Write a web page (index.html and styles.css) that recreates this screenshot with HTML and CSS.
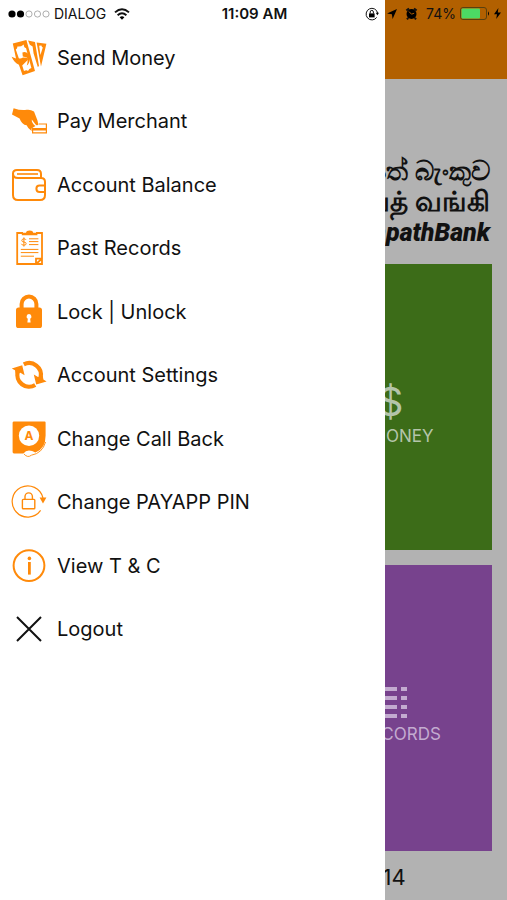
FILE: index.html
```html
<!DOCTYPE html>
<html lang="en">
<head>
  <meta charset="UTF-8" />
  <meta name="viewport" content="width=device-width, initial-scale=1.0"/>
  <title>PayApp</title>
  <link rel="stylesheet" href="styles.css">
</head>
<body>
  <!-- Status bar -->
  <div class="status-bar">
    <div class="status-left">
      <svg class="signal" width="42" height="10" viewBox="0 0 42 10">
        <circle cx="4" cy="5" r="3.6"/>
        <circle cx="12.5" cy="5" r="3.6"/>
        <g fill="none" stroke="#999" stroke-width="0.8">
          <circle cx="21" cy="5" r="3.1"/>
          <circle cx="29.5" cy="5" r="3.1"/>
          <circle cx="38" cy="5" r="3.1"/>
        </g>
      </svg>
      <span>DIALOG</span>
      <svg class="wifi" width="16" height="12" viewBox="0 0 16 12">
        <g fill="none" stroke="#111" stroke-width="1.9">
          <path d="M1 4.4Q8 -2 15 4.4"/>
          <path d="M3.6 7.3Q8 3.3 12.4 7.3"/>
        </g>
        <path d="M5.6 9.3Q8 7.3 10.4 9.3L8 11.8z"/>
      </svg>
    </div>
    <time>11:09 AM</time>
    <div class="status-right">
      <svg width="14" height="14" viewBox="0 0 14 14">
        <path d="M11.7 10.4A5.8 5.8 0 1 1 12.6 6" fill="none" stroke="#111" stroke-width="1"/>
        <path d="M10.8 5.8h3.2l-1.6 2.4z"/>
        <rect x="4" y="6.4" width="5.6" height="4"/>
        <path d="M5.2 6.6V5a1.6 1.6 0 0 1 3.2 0v1.6" fill="none" stroke="#111"/>
      </svg>
      <svg width="10" height="10" viewBox="0 0 10 10">
        <path d="M10 0L5.6 10L4.9 5.2L0 4.5z"/>
      </svg>
      <svg width="13" height="13" viewBox="0 0 13 13">
        <circle cx="6.5" cy="7" r="5"/>
        <path d="M1.4 3.6L4 1.4M11.6 3.6L9 1.4M3.2 10.8L2 12.4M9.8 10.8L11 12.4" stroke="#111" stroke-width="2"/>
        <path d="M4 4.6L6.5 7.2L9.2 6.2" fill="none" stroke="#b26000"/>
      </svg>
      <span>74%</span>
      <svg class="battery" width="30" height="13" viewBox="0 0 30 13">
        <rect x="0.5" y="0.5" width="26" height="12" rx="2.5" fill="none" stroke="#59400f"/>
        <rect x="1.5" y="1.5" width="18.5" height="10" rx="1" fill="#4cd964"/>
        <path d="M28 4.2Q30 6.5 28 8.8z"/>
      </svg>
      <svg width="7" height="11" viewBox="0 0 7 11">
        <path d="M4.4 0L0 6.3H3L2.2 11L7 4.4H3.8z"/>
      </svg>
    </div>
  </div>

  <!-- Slide-out menu -->
  <nav class="drawer">
    <ul class="menu">
      <li><a href="#send">
        <svg class="icon" viewBox="0 0 36 36">
          <path fill-rule="evenodd" d="M1.8 3.6L15.4 0L24 31L11.6 35.2L7.9 24.8C4.8 23.6 2.4 20.8 0.6 16.8L5 18.4zM6.4 6.4C6.4 8 5.6 9 4.8 9.4L7.8 18.2Q9.6 19 12 17.4L16.4 17.8Q18 20 15.2 21.4L11.2 25.4L13 31Q15.6 29.6 17 31Q18 28.4 20.4 28L15 8Q12.8 7.6 12.8 4.4Q9.2 7.2 6.4 6.4z"/>
          <path d="M11.4 12.4Q17.8 10.8 18.4 18.4Q18.6 24 15.8 25.4Q17.4 20 16 17.4L11.8 16.6z"/>
          <path d="M17 0.4L24 2L28 26L26.8 27L22.6 13.4L21.6 6.4L18.8 4.8z"/>
          <path fill-rule="evenodd" d="M25.6 2.4L35.4 3.8L30 26.6L28.6 19zM28.2 5.8L29.4 15L31.8 7.4Q30.6 7 30.4 5.6z"/>
        </svg>
        <span>Send Money</span></a></li>
      <li><a href="#pay">
        <svg class="icon" viewBox="0 0 36 36">
          <path d="M2.6 5.2Q10 7.8 15.6 6.8Q19.4 6.2 23 8.4L26.4 17.2L27.4 21.6Q26.4 23.2 24.6 21.4L20.8 16.6Q20.4 20 24.4 23L20.6 25.6L20.6 28Q17 25.6 15.6 22.2Q10.8 21.6 8.6 15.4L1 11.4z"/>
          <path fill-rule="evenodd" d="M27.8 20.4H36V30.4H21V25H34.8V21.6H27.8zM22.2 27.6V29.2H34.8V27.6z"/>
        </svg>
        <span>Pay Merchant</span></a></li>
      <li><a href="#balance">
        <svg class="icon line" viewBox="0 0 36 36" stroke-width="2">
          <path d="M2 6V28Q2 33 7 33H29Q34 33 34 28V15Q34 11 30 11H7Q2 11 2 6.5Q2 3 6 3H26Q30 3 30 7V11"/>
          <path d="M6 7H27" stroke-width="1.6"/>
          <path d="M34 18.6H28.6Q25.4 18.6 25.4 21.8T28.6 25H34"/>
        </svg>
        <span>Account Balance</span></a></li>
      <li><a href="#records">
        <svg class="icon" viewBox="0 0 36 36">
          <path class="line" stroke-width="1.8" d="M12 3H6.2V34H25L31 28.6V3H25M25 34V28.6H31V34H25"/>
          <path d="M10.8 5.2V2.8H15Q15.4 0.4 18.6 0.4T22.2 2.8H26.4V5.2z"/>
          <path class="line" stroke-width="1" d="M18 8.8H27.4M18 11.6H27.4M18 14.6H27.4M9.8 19.4H27.4M9.8 22.6H27.4M9.8 26.2H23"/>
          <path class="line" stroke-width="1" d="M15 9.8Q14.6 8.8 12.8 8.8Q10.8 9 10.8 10.6Q11 12 13 12Q15.2 12.2 15.2 13.8Q15 15.2 12.8 15.2Q10.8 15.2 10.4 13.8M12.9 7.4V16.6"/>
        </svg>
        <span>Past Records</span></a></li>
      <li><a href="#lock">
        <svg class="icon" viewBox="0 0 36 36">
          <path class="line" stroke-width="4" d="M10.6 16V10A7.4 7.4 0 0 1 25.4 10V16"/>
          <path fill-rule="evenodd" d="M7.6 13.4H28.4Q31 13.4 31 16V31.4Q31 34 28.4 34H7.6Q5 34 5 31.4V16Q5 13.4 7.6 13.4zM18 20A2.6 2.6 0 0 0 16.8 24.8L16.4 28.6H19.6L19.2 24.8A2.6 2.6 0 0 0 18 20z"/>
        </svg>
        <span>Lock | Unlock</span></a></li>
      <li><a href="#settings">
        <svg class="icon" viewBox="0 0 36 36">
          <path class="line" stroke-width="4.2" d="M12.8 7.4A11.8 11.8 0 0 1 29.6 20.6M24.2 28A11.8 11.8 0 0 1 6.8 14.6"/>
          <path d="M0.8 11.4L11.2 8.2L13.6 18.2L9.4 15.8L4.6 16.8L4 13.2zM35.6 24.4L25.2 27.4L22.8 17.4L27 20L31.8 18.8L32.4 22.6z"/>
        </svg>
        <span>Account Settings</span></a></li>
      <li><a href="#callback">
        <svg class="icon" viewBox="0 0 36 36">
          <path d="M3 0.4H33.6Q34.6 0.4 34.6 1.4V14.6Q34.6 28 24.4 31.6Q21 29.6 18 29.6Q14.6 29.8 12.4 32.4H3Q1.6 32.4 1.6 31V1.8Q1.6 0.4 3 0.4z"/>
          <circle cx="18" cy="14.8" r="10.2" fill="#fff"/>
          <path class="line" stroke-width="0.9" d="M13 33Q16.6 37.2 20.4 34.2Q31.4 32.2 34.6 21"/>
          <path d="M14 31.6L20 30L21.4 32.4L17 34.4z" fill="#fff"/>
          <text x="18" y="19" text-anchor="middle">A</text>
        </svg>
        <span>Change Call Back</span></a></li>
      <li><a href="#pin">
        <svg class="icon" viewBox="0 0 36 36">
          <path class="line" stroke-width="1.2" d="M29.6 26.4A15.6 15.6 0 1 1 32 14"/>
          <path d="M28.6 13.6H35.4L32 19.6z"/>
          <rect class="line" stroke-width="1.4" x="11.4" y="15.4" width="12.4" height="9.4" rx="0.8"/>
          <path class="line" stroke-width="1.4" d="M14 15.2V12.6A3.7 3.7 0 0 1 21.4 12.6V15.2"/>
        </svg>
        <span>Change PAYAPP PIN</span></a></li>
      <li><a href="#terms">
        <svg class="icon" viewBox="0 0 36 36">
          <circle class="line" stroke-width="2" cx="18" cy="17.6" r="15.4"/>
          <circle cx="18.4" cy="10.4" r="1.8"/>
          <path d="M17 14H19.8V26.6H17z"/>
        </svg>
        <span>View T &amp; C</span></a></li>
      <li><a href="#logout">
        <svg class="icon" viewBox="0 0 36 36">
          <path d="M6 6L30 30M30 6L6 30" stroke="#111" stroke-width="2"/>
        </svg>
        <span>Logout</span></a></li>
    </ul>
  </nav>

  <!-- Home screen, dimmed while the menu is open -->
  <main class="home">
    <header class="top-bar"></header>
    <div class="brand">
      <p class="sinhala" lang="si">සම්පත් බැංකුව</p>
      <p class="tamil" lang="ta">சம்பத் வங்கி</p>
      <p class="english">SampathBank</p>
    </div>
    <div class="tiles">
      <button class="tile send">
        <span class="dollar">$</span>
        <span>SEND MONEY</span>
      </button>
      <button class="tile records">
        <svg width="60" height="34" viewBox="0 0 60 34" fill="none" stroke="#c3abd0" stroke-width="4">
          <path d="M0 3H50M0 12H50M0 21H50M0 30H50M54 3H60M54 12H60M54 21H60M54 30H60"/>
        </svg>
        <span>PAST RECORDS</span>
      </button>
    </div>
    <footer>14</footer>
  </main>
</body>
</html>
```

FILE: styles.css
```css
/* Basic resets and layout */
* {
  margin: 0;
  padding: 0;
  box-sizing: border-box;
}
body {
  position: relative;
  min-height: 100vh;
  font-family: Inter, "Liberation Sans", sans-serif;
  color: #111;
  background: #b2b2b2;
  overflow-x: hidden;
}

/* Status bar */
.status-bar {
  position: absolute;
  top: 0;
  left: 0;
  right: 0;
  z-index: 3;
  display: grid;
  grid-template-columns: 1fr auto 1fr;
  align-items: center;
  height: 27px;
  padding: 0 6px 0 8px;
  font-size: 14px;
}
.status-bar time {
  font-size: 15px;
  font-weight: 600;
}
.status-left,
.status-right {
  display: flex;
  align-items: center;
  gap: 4px;
}
.status-left .wifi {
  margin-left: 4px;
}
.status-right {
  justify-content: flex-end;
  gap: 8px;
}
.status-right span,
.status-right .battery {
  margin-right: -4px;
}

/* Menu */
.drawer {
  position: absolute;
  top: 0;
  bottom: 0;
  left: 0;
  z-index: 2;
  width: 76%;
  padding-top: 26px;
  background: #fff;
}
.menu {
  display: grid;
  grid-auto-rows: 1fr;
  min-height: 635px;
  list-style: none;
}
.menu a {
  display: flex;
  align-items: center;
  gap: 10px;
  height: 100%;
  padding: 0 11px;
  font-size: 20px;
  color: #111;
  text-decoration: none;
}
.icon {
  width: 36px;
  height: 36px;
  fill: #ff8a0a;
}
.line {
  fill: none;
  stroke: #ff8a0a;
}
.icon text {
  font-size: 12px;
  font-weight: 700;
}

/* Home screen */
.home {
  min-height: 100vh;
}
.top-bar {
  height: 79px;
  background: #b26000;
}
.brand {
  height: 185px;
  padding: 76px 17px 0 0;
  text-align: right;
}
.brand p {
  line-height: 31px;
  white-space: nowrap;
}
.brand .sinhala {
  font-size: 27px;
  font-weight: 600;
}
.brand .tamil {
  font-size: 28px;
  font-weight: 600;
}
.brand .english {
  font-family: Roboto, sans-serif;
  font-size: 25px;
  font-weight: 900;
  font-style: italic;
}
.tiles {
  display: grid;
  grid-template-columns: 1fr 1fr;
  gap: 15px;
  padding: 0 15px;
}
.tile {
  grid-column: 2;
  display: flex;
  flex-direction: column;
  align-items: center;
  justify-content: center;
  gap: 4px;
  height: 286px;
  padding-top: 14px;
  border: none;
  font-family: inherit;
  font-size: 17px;
  cursor: pointer;
}
.send {
  background: #3c6c18;
  color: #b4c4aa;
}
.records {
  background: #77428d;
  color: #c3abd0;
}
.dollar {
  padding-left: 28px;
  font-size: 40px;
  line-height: 40px;
}
footer {
  padding: 12px 20% 10px 0;
  font-size: 22px;
  line-height: 28px;
  text-align: right;
}
```
